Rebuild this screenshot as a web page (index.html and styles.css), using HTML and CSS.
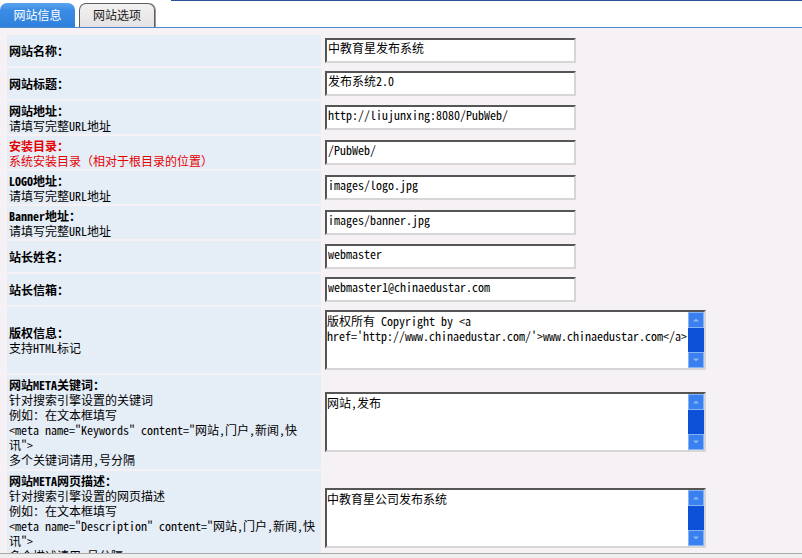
FILE: index.html
```html
<!DOCTYPE html>
<html lang="zh-CN">
<head>
<meta charset="utf-8">
<title>网站信息</title>
<link rel="stylesheet" href="styles.css">
</head>
<body>
<div class="tabbar">
  <div class="tab tab-on">网站信息</div>
  <div class="tab tab-off">网站选项</div>
  <div class="tabfill"></div>
</div>

<div class="form">
  <div class="lbl"><b>网站名称：</b></div>
  <div class="fld"><input class="txt" type="text" value="中教育星发布系统"></div>

  <div class="lbl"><b>网站标题：</b></div>
  <div class="fld"><input class="txt" type="text" value="发布系统2.0"></div>

  <div class="lbl"><b>网站地址：</b><span>请填写完整URL地址</span></div>
  <div class="fld"><input class="txt" type="text" value="http://liujunxing:8080/PubWeb/"></div>

  <div class="lbl red"><b>安装目录：</b><span>系统安装目录（相对于根目录的位置）</span></div>
  <div class="fld"><input class="txt" type="text" value="/PubWeb/"></div>

  <div class="lbl"><b>LOGO地址：</b><span>请填写完整URL地址</span></div>
  <div class="fld"><input class="txt" type="text" value="images/logo.jpg"></div>

  <div class="lbl"><b>Banner地址：</b><span>请填写完整URL地址</span></div>
  <div class="fld"><input class="txt" type="text" value="images/banner.jpg"></div>

  <div class="lbl"><b>站长姓名：</b></div>
  <div class="fld"><input class="txt" type="text" value="webmaster"></div>

  <div class="lbl"><b>站长信箱：</b></div>
  <div class="fld"><input class="txt" type="text" value="webmaster1@chinaedustar.com"></div>

  <div class="lbl"><b>版权信息：</b><span>支持HTML标记</span></div>
  <div class="fld">
    <div class="area">
      <textarea class="area-text">版权所有 Copyright by &lt;a href='http://www.chinaedustar.com/'&gt;www.chinaedustar.com&lt;/a&gt;</textarea>
      <div class="sbar">
        <span class="sbtn"><svg width="14" height="14" viewBox="0 0 14 14"><path d="M4 8.5 L7 5.5 L10 8.5 Z" fill="#8fb6f2"/></svg></span>
        <span class="strack"></span>
        <span class="sbtn"><svg width="14" height="14" viewBox="0 0 14 14"><path d="M4 5.5 L7 8.5 L10 5.5 Z" fill="#8fb6f2"/></svg></span>
      </div>
    </div>
  </div>

  <div class="lbl tall"><b>网站META关键词：</b><span>针对搜索引擎设置的关键词</span><span>例如：在文本框填写</span><span>&lt;meta name="Keywords" content="网站,门户,新闻,快讯"&gt;</span><span>多个关键词请用,号分隔</span></div>
  <div class="fld">
    <div class="area">
      <textarea class="area-text">网站,发布</textarea>
      <div class="sbar">
        <span class="sbtn"><svg width="14" height="14" viewBox="0 0 14 14"><path d="M4 8.5 L7 5.5 L10 8.5 Z" fill="#8fb6f2"/></svg></span>
        <span class="strack"></span>
        <span class="sbtn"><svg width="14" height="14" viewBox="0 0 14 14"><path d="M4 5.5 L7 8.5 L10 5.5 Z" fill="#8fb6f2"/></svg></span>
      </div>
    </div>
  </div>

  <div class="lbl tall"><b>网站META网页描述：</b><span>针对搜索引擎设置的网页描述</span><span>例如：在文本框填写</span><span>&lt;meta name="Description" content="网站,门户,新闻,快讯"&gt;</span><span>多个描述请用,号分隔</span></div>
  <div class="fld">
    <div class="area">
      <textarea class="area-text">中教育星公司发布系统</textarea>
      <div class="sbar">
        <span class="sbtn"><svg width="14" height="14" viewBox="0 0 14 14"><path d="M4 8.5 L7 5.5 L10 8.5 Z" fill="#8fb6f2"/></svg></span>
        <span class="strack"></span>
        <span class="sbtn"><svg width="14" height="14" viewBox="0 0 14 14"><path d="M4 5.5 L7 8.5 L10 5.5 Z" fill="#8fb6f2"/></svg></span>
      </div>
    </div>
  </div>
</div>

<div class="bottombar"></div>
</body>
</html>
```

FILE: styles.css
```css
html, body {
  margin: 0;
  padding: 0;
}
body {
  background: #f5f1f5;
  font-family: "Noto Sans Mono CJK SC", "Liberation Mono", "Noto Sans CJK SC", monospace;
  font-size: 12px;
  color: #000;
}

.tabbar {
  display: flex;
  align-items: flex-end;
  height: 27px;
  background: #ffffff;
  border-bottom: 1px solid #4d88c9;
}
.tab {
  height: 24px;
  box-sizing: border-box;
  display: flex;
  align-items: center;
  justify-content: center;
  padding-bottom: 1px;
  font-size: 12px;
  line-height: 14px;
  border-radius: 7px 7px 0 0;
}
.tab-on {
  width: 75px;
  color: #ffffff;
  background: linear-gradient(#5aa4ee, #3a8ce4 30%, #2f80dc);
}
.tab-off {
  width: 76px;
  margin-left: 4px;
  color: #1a1a1a;
  background: linear-gradient(#f2f0f0, #e4e2e2);
  border: 1px solid #5f5f5f;
  border-bottom: 0;
  box-shadow: 1px 0 0 #9a9a9a;
}
.tabfill {
  flex: 1;
  align-self: flex-start;
  height: 1px;
  margin-left: 16px;
  background: #2a5694;
}

.form {
  display: grid;
  grid-template-columns: 314px 1fr;
  gap: 2px;
  margin: 7px 7px 0 7px;
}
.lbl {
  background: #e5edf7;
  padding: 1.5px 2px;
  display: flex;
  flex-direction: column;
  justify-content: center;
  line-height: 15px;
}
.lbl b {
  font-weight: bold;
}
.lbl.tall {
  padding: 2px;
}
.lbl.red {
  color: #e60000;
}
.fld {
  padding: 2px;
  display: flex;
  align-items: center;
}

.txt {
  box-sizing: border-box;
  width: 251px;
  height: 25px;
  margin: 1px 0;
  padding: 1px 1px 8px 1px;
  line-height: 12px;
  font-family: inherit;
  font-size: 12px;
  color: #000;
  background: #ffffff;
  border-style: solid;
  border-width: 2px;
  border-color: #555555 #d6d6d6 #d6d6d6 #555555;
  outline: none;
}

.area {
  box-sizing: border-box;
  width: 381px;
  height: 60px;
  margin: 1px 0;
  display: flex;
  background: #ffffff;
  border-style: solid;
  border-width: 2px;
  border-color: #555555 #d6d6d6 #d6d6d6 #555555;
}
.area-text {
  flex: 1;
  min-width: 0;
  margin: 0;
  padding: 1px 0 0 0;
  border: 0;
  resize: none;
  overflow: hidden;
  outline: none;
  font-family: inherit;
  font-size: 12px;
  line-height: 15px;
  color: #000;
  background: #ffffff;
}
.sbar {
  width: 16px;
  display: flex;
  flex-direction: column;
  background: #0b50d6;
}
.sbtn {
  box-sizing: border-box;
  height: 16px;
  display: flex;
  align-items: center;
  justify-content: center;
  background: #3b80f0;
  border: 1px solid #86b2f6;
}
.strack {
  flex: 1;
}

.bottombar {
  position: fixed;
  left: 0;
  right: 0;
  bottom: 0;
  height: 4px;
  background: #eeeeee;
  border-top: 1px solid #aaaaaa;
}
```
